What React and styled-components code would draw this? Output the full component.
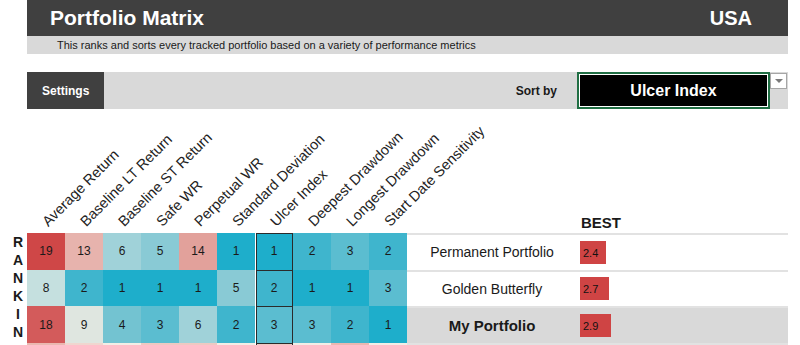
import React from 'react'
import styled, { createGlobalStyle } from 'styled-components';

const GlobalStyle = createGlobalStyle`
    html, body {
        margin:0;
        padding:0;
        overflow:hidden;
        background:#fff;
        font-family:"Liberation Sans", Arial, sans-serif;
        color:#1a1a1a;
    }
`;

const Page = styled.div`
    width:788px;
`;

const TitleBar = styled.header`
    margin-left:27px;
    height:36px;
    background-color:#404040;
    color:#fff;
    display:flex;
    justify-content:space-between;
    align-items:center;
    padding:0 36px 0 23px;
    font-weight:bold;
`;

const Title = styled.h1`
    margin:0;
    font-size:21px;
`;

const Country = styled.span`
    font-size:20px;
`;

const SubBar = styled.div`
    margin-left:27px;
    height:18px;
    line-height:18px;
    background-color:#d9d9d9;
    font-size:11px;
    padding-left:30px;
`;

const SettingsBar = styled.div`
    margin:18px 0 0 27px;
    height:37px;
    background-color:#d9d9d9;
    display:flex;
    align-items:stretch;
`;

const SettingsTab = styled.div`
    width:77px;
    background-color:#404040;
    color:#fff;
    font-size:12px;
    font-weight:bold;
    display:flex;
    align-items:center;
    padding-left:15px;
    box-sizing:border-box;
`;

const SortLabel = styled.div`
    margin-left:auto;
    margin-right:20px;
    align-self:center;
    font-size:12px;
    font-weight:bold;
`;

const SortBox = styled.div`
    width:193px;
    box-sizing:border-box;
    border:2px solid #1f6e43;
    box-shadow:inset 0 0 0 1px #fff;
    background-color:#000;
    color:#fff;
    font-size:16px;
    font-weight:bold;
    display:flex;
    justify-content:center;
    align-items:center;
`;

const DropArrow = styled.div`
    width:17px;
    height:16px;
    margin:1px 1px 0 0;
    box-sizing:border-box;
    border:1px solid #a6a6a6;
    background:#fff;
    display:flex;
    justify-content:center;
    align-items:center;

    &:after{
        content:'';
        border-left:4px solid transparent;
        border-right:4px solid transparent;
        border-top:4px solid #7a7a7a;
    }
`;

const HeaderRow = styled.div`
    margin-left:27px;
    height:124px;
    display:flex;
`;

const HeadCell = styled.div`
    width:38px;
    flex-shrink:0;
    display:flex;
    align-items:flex-end;
`;

const HeadLabel = styled.span`
    flex-shrink:0;
    white-space:nowrap;
    font-size:14.5px;
    line-height:17px;
    color:#222;
    transform-origin:0 100%;
    transform:rotate(-45deg);
    margin:0 0 3px 24px;
`;

const NameHead = styled.div`
    width:170px;
    flex-shrink:0;
`;

const BestHead = styled.div`
    align-self:flex-end;
    margin:0 0 2px 4px;
    font-size:15px;
    font-weight:bold;
`;

const Body = styled.div`
    display:flex;
`;

const Letters = styled.div`
    width:27px;
    box-sizing:border-box;
    padding-left:9px;
    text-align:center;
    font-size:14px;
    font-weight:bold;
    line-height:18px;
`;

const Rows = styled.div`
    width:761px;
`;

const DataRow = styled.div`
    display:flex;
    height:36.67px;
`;

const Cell = styled.div`
    width:38px;
    flex-shrink:0;
    background-color:${({ bg }) => bg};
    display:flex;
    justify-content:center;
    align-items:center;
    font-size:12px;
    box-shadow:${({ active }) => active
        ? 'inset 1px 0 0 #fff, inset 2px 0 0 #2b2b2b, inset -1px 0 0 #2b2b2b, inset 0 1px 0 #2b2b2b'
        : 'none'};
`;

const NameCell = styled.div`
    width:170px;
    flex-shrink:0;
    box-sizing:border-box;
    border-top:2px solid #e2e2e2;
    background-color:${({ mine }) => mine ? '#d9d9d9' : '#fff'};
    font-size:${({ mine }) => mine ? '15px' : '14px'};
    font-weight:${({ mine }) => mine ? 'bold' : 'normal'};
    display:flex;
    justify-content:center;
    align-items:center;
`;

const BestCell = styled.div`
    flex:1;
    box-sizing:border-box;
    border-top:2px solid #e2e2e2;
    background-color:${({ mine }) => mine ? '#d9d9d9' : '#fff'};
    padding-left:3px;
    display:flex;
    align-items:center;
`;

const BestValue = styled.span`
    background-color:#cf4444;
    height:23px;
    line-height:24px;
    padding:0 ${({ pad }) => pad}px 0 3px;
    font-size:11px;
    color:#111;
`;

const metrics = [
    'Average Return', 'Baseline LT Return', 'Baseline ST Return', 'Safe WR', 'Perpetual WR',
    'Standard Deviation', 'Ulcer Index', 'Deepest Drawdown', 'Longest Drawdown', 'Start Date Sensitivity'
];

const colors = {
    1: '#1eaecb', 2: '#3fb5cd', 3: '#5bbdd0', 4: '#73c3d1', 5: '#89cad5', 6: '#a0d2d9',
    8: '#c5e0df', 9: '#dfe6e0', 10: '#f3eee6', 11: '#eec9c2', 12: '#eab8b1', 13: '#e7b3ad',
    14: '#e2a19b', 15: '#f0d6cf', 18: '#d35b5b', 19: '#cf4747'
};

const portfolios = [
    { name: 'Permanent Portfolio', ranks: [19, 13, 6, 5, 14, 1, 1, 2, 3, 2], best: '2.4', pad: 8 },
    { name: 'Golden Butterfly', ranks: [8, 2, 1, 1, 1, 5, 2, 1, 1, 3], best: '2.7', pad: 11 },
    { name: 'My Portfolio', ranks: [18, 9, 4, 3, 6, 2, 3, 3, 2, 1], best: '2.9', pad: 13, mine: true },
    { name: 'All Weather', ranks: [12, 15, 10, 11, 11, 10, 11, 10, 12, 10], best: '3.1', pad: 8 },
];

const App = () => {
    const sortIndex = metrics.indexOf('Ulcer Index');

    return (
        <>
            <GlobalStyle />
            <Page>
                <TitleBar>
                    <Title>Portfolio Matrix</Title>
                    <Country>USA</Country>
                </TitleBar>
                <SubBar>
                    This ranks and sorts every tracked portfolio based on a variety of performance metrics
                </SubBar>
                <SettingsBar>
                    <SettingsTab>Settings</SettingsTab>
                    <SortLabel>Sort by</SortLabel>
                    <SortBox>Ulcer Index</SortBox>
                    <DropArrow />
                </SettingsBar>

                <HeaderRow>
                    {metrics.map(metric => (
                        <HeadCell key={metric}>
                            <HeadLabel>{metric}</HeadLabel>
                        </HeadCell>
                    ))}
                    <NameHead />
                    <BestHead>BEST</BestHead>
                </HeaderRow>

                <Body>
                    <Letters>
                        {'RANKING'.split('').map((letter, i) => <div key={i}>{letter}</div>)}
                    </Letters>
                    <Rows>
                        {portfolios.map(p => (
                            <DataRow key={p.name}>
                                {p.ranks.map((rank, i) => (
                                    <Cell key={i} bg={colors[rank]} active={i === sortIndex}>
                                        {rank}
                                    </Cell>
                                ))}
                                <NameCell mine={p.mine}>{p.name}</NameCell>
                                <BestCell mine={p.mine}>
                                    <BestValue pad={p.pad}>{p.best}</BestValue>
                                </BestCell>
                            </DataRow>
                        ))}
                    </Rows>
                </Body>
            </Page>
        </>
    )
}

export default App;
